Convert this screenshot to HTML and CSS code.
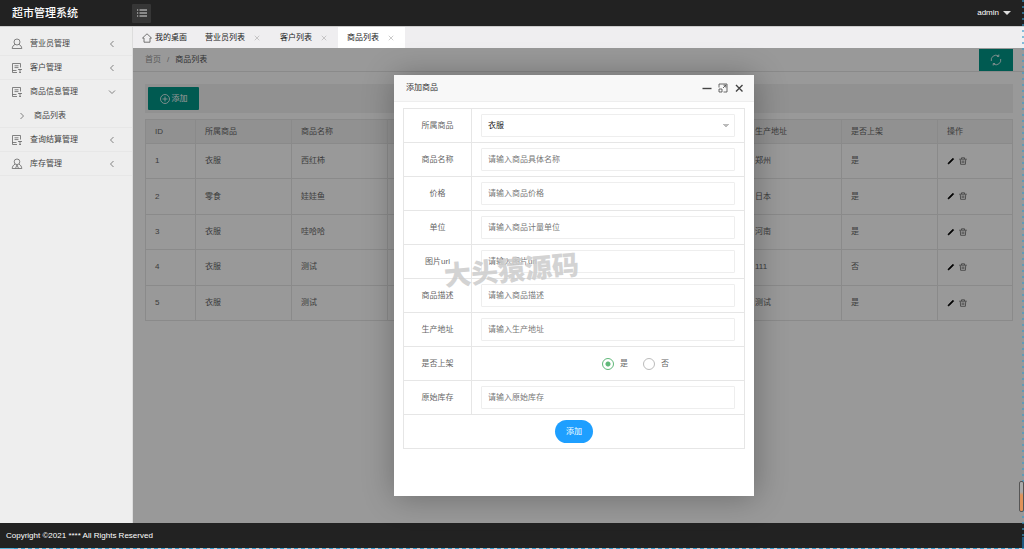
FILE: index.html
```html
<!DOCTYPE html>
<html lang="zh-CN">
<head>
<meta charset="utf-8">
<title>超市管理系统</title>
<link rel="stylesheet" href="styles.css">
</head>
<body>
<svg class="symbols" aria-hidden="true">
  <symbol id="i-user" viewBox="0 0 12 12"><circle cx="6" cy="4" r="3"/><path d="M4.2 6.4C2.6 7 1.3 8.400 1.200 10.500h9.600C10.700 8.400 9.400 7 7.800 6.400"/></symbol>
  <symbol id="i-form" viewBox="0 0 12 12"><path d="M9.500 5.500V1.500h-8v9H6M1.500 8.500H5.500M3.500 3.800h4M3.500 5.600h4M7 7.500h4M8.200 10.500h1.800M9 7v3.500"/></symbol>
  <symbol id="i-agent" viewBox="0 0 12 12"><circle cx="6" cy="3.800" r="2.800"/><path d="M4 6.200C2.400 7 1.300 8.500 1.200 10.500h9.600C10.700 8.500 9.600 7 8 6.200M6 7 4.500 10.300M6 7l1.500 3.300"/></symbol>
  <symbol id="i-left" viewBox="0 0 8 8"><path d="M5.500 1 2.500 4l3 3"/></symbol>
  <symbol id="i-right" viewBox="0 0 8 8"><path d="m2.500 1 3 3-3 3"/></symbol>
  <symbol id="i-down" viewBox="0 0 8 8"><path d="m1 2.500 3 3 3-3"/></symbol>
  <symbol id="i-x" viewBox="0 0 8 8"><path d="m1 1 6 6M7 1 1 7"/></symbol>
  <symbol id="i-edit" viewBox="0 0 8 8"><path class="solid" d="M1 7 1.500 5.700 5.900 1.300l.8.8-4.400 4.400z"/></symbol>
  <symbol id="i-trash" viewBox="0 0 8 8"><path d="M.2 2.200h7.600M2.500 2V.8h3V2M1.300 2.500l.3 4.800h4.800l.3-4.800M3.200 3.500v2.500M4.800 3.500v2.500"/></symbol>
</svg>
<div class="app">
  <header class="topbar">
    <h1 class="brand">超市管理系统</h1>
    <button class="toggle" aria-label="菜单"><svg class="icon" viewBox="0 0 10 8"><path d="M0 1h1.200M2.500 1H10M0 4h1.200M2.500 4H10M0 7h1.200M2.500 7H10"/></svg></button>
    <a class="account" href="#">admin <span class="caret"></span></a>
  </header>
  <div class="body">
    <nav class="side">
      <a class="item" href="#"><svg class="icon lead"><use href="#i-user"/></svg><span>营业员管理</span><svg class="icon arrow"><use href="#i-left"/></svg></a>
      <a class="item" href="#"><svg class="icon lead"><use href="#i-form"/></svg><span>客户管理</span><svg class="icon arrow"><use href="#i-left"/></svg></a>
      <a class="item open" href="#"><svg class="icon lead"><use href="#i-form"/></svg><span>商品信息管理</span><svg class="icon arrow"><use href="#i-down"/></svg></a>
      <a class="item sub" href="#"><svg class="icon arrow"><use href="#i-right"/></svg><span>商品列表</span></a>
      <a class="item" href="#"><svg class="icon lead"><use href="#i-form"/></svg><span>查询结算管理</span><svg class="icon arrow"><use href="#i-left"/></svg></a>
      <a class="item" href="#"><svg class="icon lead"><use href="#i-agent"/></svg><span>库存管理</span><svg class="icon arrow"><use href="#i-left"/></svg></a>
    </nav>
    <main class="main">
      <div class="tabs">
        <a class="tab home" href="#"><svg class="icon house" viewBox="0 0 10 10"><path d="M.5 5 5 .8 9.500 5H8v4.200H2V5z"/></svg>我的桌面</a>
        <a class="tab" href="#">营业员列表<svg class="icon close"><use href="#i-x"/></svg></a>
        <a class="tab" href="#">客户列表<svg class="icon close"><use href="#i-x"/></svg></a>
        <a class="tab active" href="#">商品列表<svg class="icon close"><use href="#i-x"/></svg></a>
      </div>
      <div class="view">
        <div class="crumbs"><a href="#">首页</a><span>/</span><b>商品列表</b>
          <button class="teal refresh" aria-label="刷新"><svg class="icon" viewBox="0 0 12 12"><path d="M1.300 7A4.800 4.800 0 0 1 8.500 1.900M10.700 5A4.800 4.800 0 0 1 3.500 10.100M8.800.5v2H6.900M3.200 11.500v-2h1.900"/></svg></button>
        </div>
        <div class="page">
          <div class="tools"><button class="teal add"><svg class="icon" viewBox="0 0 10 10"><circle cx="5" cy="5" r="4.500"/><path d="M5 2.500v5M2.500 5h5"/></svg>添加</button></div>
          <table class="list">
            <colgroup><col class="c-id"><col class="c-std"><col class="c-std"><col><col class="c-std"><col class="c-std"><col class="c-op"></colgroup>
            <thead><tr><th>ID</th><th>所属商品</th><th>商品名称</th><th></th><th>生产地址</th><th>是否上架</th><th>操作</th></tr></thead>
            <tbody>
              <tr><td>1</td><td>衣服</td><td>西红柿</td><td></td><td>郑州</td><td>是</td><td><a class="op" href="#" aria-label="编辑"><svg class="icon pen"><use href="#i-edit"/></svg></a><a class="op" href="#" aria-label="删除"><svg class="icon"><use href="#i-trash"/></svg></a></td></tr>
              <tr><td>2</td><td>零食</td><td>娃娃鱼</td><td></td><td>日本</td><td>是</td><td><a class="op" href="#" aria-label="编辑"><svg class="icon pen"><use href="#i-edit"/></svg></a><a class="op" href="#" aria-label="删除"><svg class="icon"><use href="#i-trash"/></svg></a></td></tr>
              <tr><td>3</td><td>衣服</td><td>哇哈哈</td><td></td><td>河南</td><td>是</td><td><a class="op" href="#" aria-label="编辑"><svg class="icon pen"><use href="#i-edit"/></svg></a><a class="op" href="#" aria-label="删除"><svg class="icon"><use href="#i-trash"/></svg></a></td></tr>
              <tr><td>4</td><td>衣服</td><td>测试</td><td></td><td>111</td><td>否</td><td><a class="op" href="#" aria-label="编辑"><svg class="icon pen"><use href="#i-edit"/></svg></a><a class="op" href="#" aria-label="删除"><svg class="icon"><use href="#i-trash"/></svg></a></td></tr>
              <tr><td>5</td><td>衣服</td><td>测试</td><td></td><td>测试</td><td>是</td><td><a class="op" href="#" aria-label="编辑"><svg class="icon pen"><use href="#i-edit"/></svg></a><a class="op" href="#" aria-label="删除"><svg class="icon"><use href="#i-trash"/></svg></a></td></tr>
            </tbody>
          </table>
        </div>
        <div class="shade">
          <section class="dialog" role="dialog" aria-labelledby="dlg-title">
            <div class="dialog-head">
              <h2 id="dlg-title">添加商品</h2>
              <button aria-label="最小化"><svg class="icon" viewBox="0 0 10 10"><path class="thick" d="M.5 5.500h9"/></svg></button>
              <button aria-label="最大化"><svg class="icon" viewBox="0 0 10 10"><path d="M1 4.500V1h8v8H5.500M5 5l2.800-2.800M5.500 2.200h2.300v2.300M1 6h3v3H1z"/></svg></button>
              <button aria-label="关闭"><svg class="icon" viewBox="0 0 10 10"><path class="thick" d="m2 2 6.500 6.500M8.500 2 2 8.500"/></svg></button>
            </div>
            <form class="form">
              <div class="row"><label for="f1">所属商品</label><div class="field"><select id="f1"><option>衣服</option></select></div></div>
              <div class="row"><label for="f2">商品名称</label><div class="field"><input type="text" id="f2" placeholder="请输入商品具体名称"></div></div>
              <div class="row"><label for="f3">价格</label><div class="field"><input type="text" id="f3" placeholder="请输入商品价格"></div></div>
              <div class="row"><label for="f4">单位</label><div class="field"><input type="text" id="f4" placeholder="请输入商品计量单位"></div></div>
              <div class="row"><label for="f5">图片url</label><div class="field"><input type="text" id="f5" placeholder="请输入图片url"></div></div>
              <div class="row"><label for="f6">商品描述</label><div class="field"><input type="text" id="f6" placeholder="请输入商品描述"></div></div>
              <div class="row"><label for="f7">生产地址</label><div class="field"><input type="text" id="f7" placeholder="请输入生产地址"></div></div>
              <div class="row"><span class="label">是否上架</span><div class="field radios"><label><input type="radio" name="on" checked>是</label><label><input type="radio" name="on">否</label></div></div>
              <div class="row"><label for="f9">原始库存</label><div class="field"><input type="text" id="f9" placeholder="请输入原始库存"></div></div>
              <div class="row submit"><button type="button">添加</button></div>
            </form>
            <div class="watermark">大头猿源码</div>
          </section>
        </div>
      </div>
    </main>
  </div>
  <footer class="foot">Copyright ©2021 **** All Rights Reserved</footer>
  <div class="edge-right"></div>
  <div class="edge-bottom"></div>
  <div class="gauge"></div>
</div>
</body>
</html>
```
FILE: styles.css
```css
* { box-sizing: border-box; }
body {
  margin: 0;
  font: 8px/12px "Liberation Sans", "Noto Sans CJK SC", sans-serif;
  color: #444;
}
a { color: inherit; text-decoration: none; }
button, input, select { font: inherit; color: inherit; margin: 0; }
button { border: 0; background: none; padding: 0; }
.symbols { position: absolute; width: 0; height: 0; }
.icon { display: block; width: 8px; height: 8px; fill: none; stroke: currentColor; stroke-width: 0.8; flex: none; }
.solid { fill: currentColor; }
.thick { stroke-width: 1.4; }

.app { position: relative; display: flex; flex-direction: column; min-height: 100vh; overflow: hidden; }
.topbar { display: flex; align-items: center; height: 26px; background: #222; color: #fff; padding-right: 13px; }
.brand { width: 132px; margin: 0; padding-left: 12px; font-size: 11px; line-height: 16px; font-weight: 500; }
.toggle { display: grid; place-items: center; width: 19px; height: 19px; background: #363636; border-radius: 1px; }
.toggle .icon { width: 10px; color: #ddd; stroke-width: 1; }
.account { display: flex; align-items: center; gap: 4px; margin-left: auto; }
.caret { border: 4px solid transparent; border-top-color: #ddd; border-bottom: 0; }

.body { flex: 1; display: flex; border-top: 1px solid #ccc; }
.side { width: 133px; background: #eee; border-right: 1px solid #ddd; padding-top: 5px; }
.item { display: flex; align-items: center; height: 24px; padding: 0 16px 0 11px; border-bottom: 1px solid #e7e7e7; }
.item span { flex: 1; padding-left: 7px; }
.lead { width: 12px; height: 12px; color: #666; }
.arrow { color: #666; }
.open { border-bottom: 0; }
.sub { padding-left: 18px; }
.sub span { padding-left: 8px; }

.main { flex: 1; display: flex; flex-direction: column; min-width: 0; }
.tabs { display: flex; height: 21px; background: #efeef0; color: #222; }
.tab { display: flex; align-items: center; gap: 9px; padding: 0 11px 0 9px; }
.home { gap: 3px; padding-right: 9px; }
.house { width: 10px; height: 10px; color: #555; }
.close { width: 6px; height: 6px; color: #aaa; }
.active { background: #fff; }

.view { position: relative; flex: 1; background: #fff; color: #666; }
.crumbs { display: flex; align-items: center; gap: 6px; height: 24px; padding: 0 11px 0 12px; border-bottom: 1px solid #e6e6e6; color: #999; }
.crumbs b { font-weight: 400; color: #555; }
.teal { display: flex; align-items: center; justify-content: center; background: #009688; color: #fff; }
.refresh { align-self: flex-end; margin-left: auto; width: 34px; height: 22px; }
.refresh .icon { width: 12px; height: 12px; }
.page { padding: 12px 11px 0 12px; }
.tools { padding: 3px; background: #f2f2f2; }
.add { width: 51px; height: 23px; gap: 2px; border-radius: 1px; }
.add .icon { width: 10px; height: 10px; }
.list { width: 100%; height: 202px; margin-top: 6px; border-collapse: collapse; table-layout: fixed; }
.list th, .list td { padding: 0 9px; border: 1px solid #e6e6e6; text-align: left; font-weight: 400; }
.list th { height: 24px; background: #f2f2f2; }
.c-id { width: 50px; }
.c-std { width: 96px; }
.c-op { width: 75px; }
.op { display: inline-block; vertical-align: middle; margin-right: 4px; }
.pen { color: #000; }

.shade { position: absolute; inset: 0; display: flex; align-items: center; justify-content: center; padding-right: 9px; background: rgba(0, 0, 0, .4); }
.dialog { position: relative; width: 360px; min-height: 421px; background: #fff; box-shadow: 1px 1px 30px rgba(0, 0, 0, .3); }
.dialog-head { display: flex; align-items: center; gap: 6px; height: 27px; padding: 0 10px 0 12px; background: #f8f8f8; border-bottom: 1px solid #eee; color: #444; }
.dialog-head h2 { flex: 1; margin: 0; font-size: 8px; line-height: 12px; font-weight: 400; color: #333; }
.dialog-head .icon { width: 10px; height: 10px; }
.form { margin: 6px 9px; border: 1px solid #e6e6e6; border-bottom: 0; }
.row { display: grid; grid-template-columns: 68px 1fr; height: 34px; border-bottom: 1px solid #e6e6e6; }
.row > label, .label { display: grid; place-items: center; border-right: 1px solid #e6e6e6; }
.field { display: flex; align-items: center; padding: 0 9px; }
.field select, .field input[type="text"] { width: 100%; height: 23px; padding: 0 6px; border: 1px solid #eee; border-radius: 1px; background: #fff; outline: 0; }
.field input::placeholder { color: #777; opacity: 1; }
.field select {
  appearance: none;
  color: #222;
  background: linear-gradient(to bottom left, #bbb 50%, transparent 50%) right 8px center / 3px 4px no-repeat,
    linear-gradient(to bottom right, #bbb 50%, transparent 50%) right 5px center / 3px 4px no-repeat, #fff;
}
.radios { justify-content: center; gap: 15px; padding-left: 64px; }
.radios label { display: flex; align-items: center; gap: 6px; }
.radios input { appearance: none; width: 12px; height: 12px; border: 1px solid #bbb; border-radius: 50%; }
.radios input:checked { border-color: #5fb878; background: radial-gradient(circle, #5fb878 2px, transparent 3px); }
.submit { grid-template-columns: auto; place-items: center; }
.submit button { width: 38px; height: 23px; border-radius: 12px; background: #1e9fff; color: #fff; }
.watermark { position: absolute; left: 50px; top: 178px; font-size: 27px; line-height: 36px; font-weight: 900; color: #ccc; opacity: .85; transform: rotate(-5deg); pointer-events: none; }

.foot { height: 26px; padding: 0 6px; background: #222; color: #fff; line-height: 26px; }
.edge-right { position: absolute; right: 0; top: 0; bottom: 0; width: 2px; background: linear-gradient(#1e7fc0, #1e7fc0) bottom / 2px 12px no-repeat, repeating-linear-gradient(#3a9ccc 0 2px, transparent 2px 6px); opacity: .6; }
.edge-bottom { position: absolute; left: 0; right: 0; bottom: 0; height: 1px; background: linear-gradient(#5ab4d8, #5ab4d8) left / 14px 1px no-repeat, repeating-linear-gradient(90deg, #3a9ccc 0 4px, #ccc 4px 7px); }
.gauge { position: absolute; right: 0; bottom: 37px; width: 5px; height: 31px; border: 1px solid #555; border-radius: 2px; background: linear-gradient(#aaa 35%, #e0935a 45%); }
```
